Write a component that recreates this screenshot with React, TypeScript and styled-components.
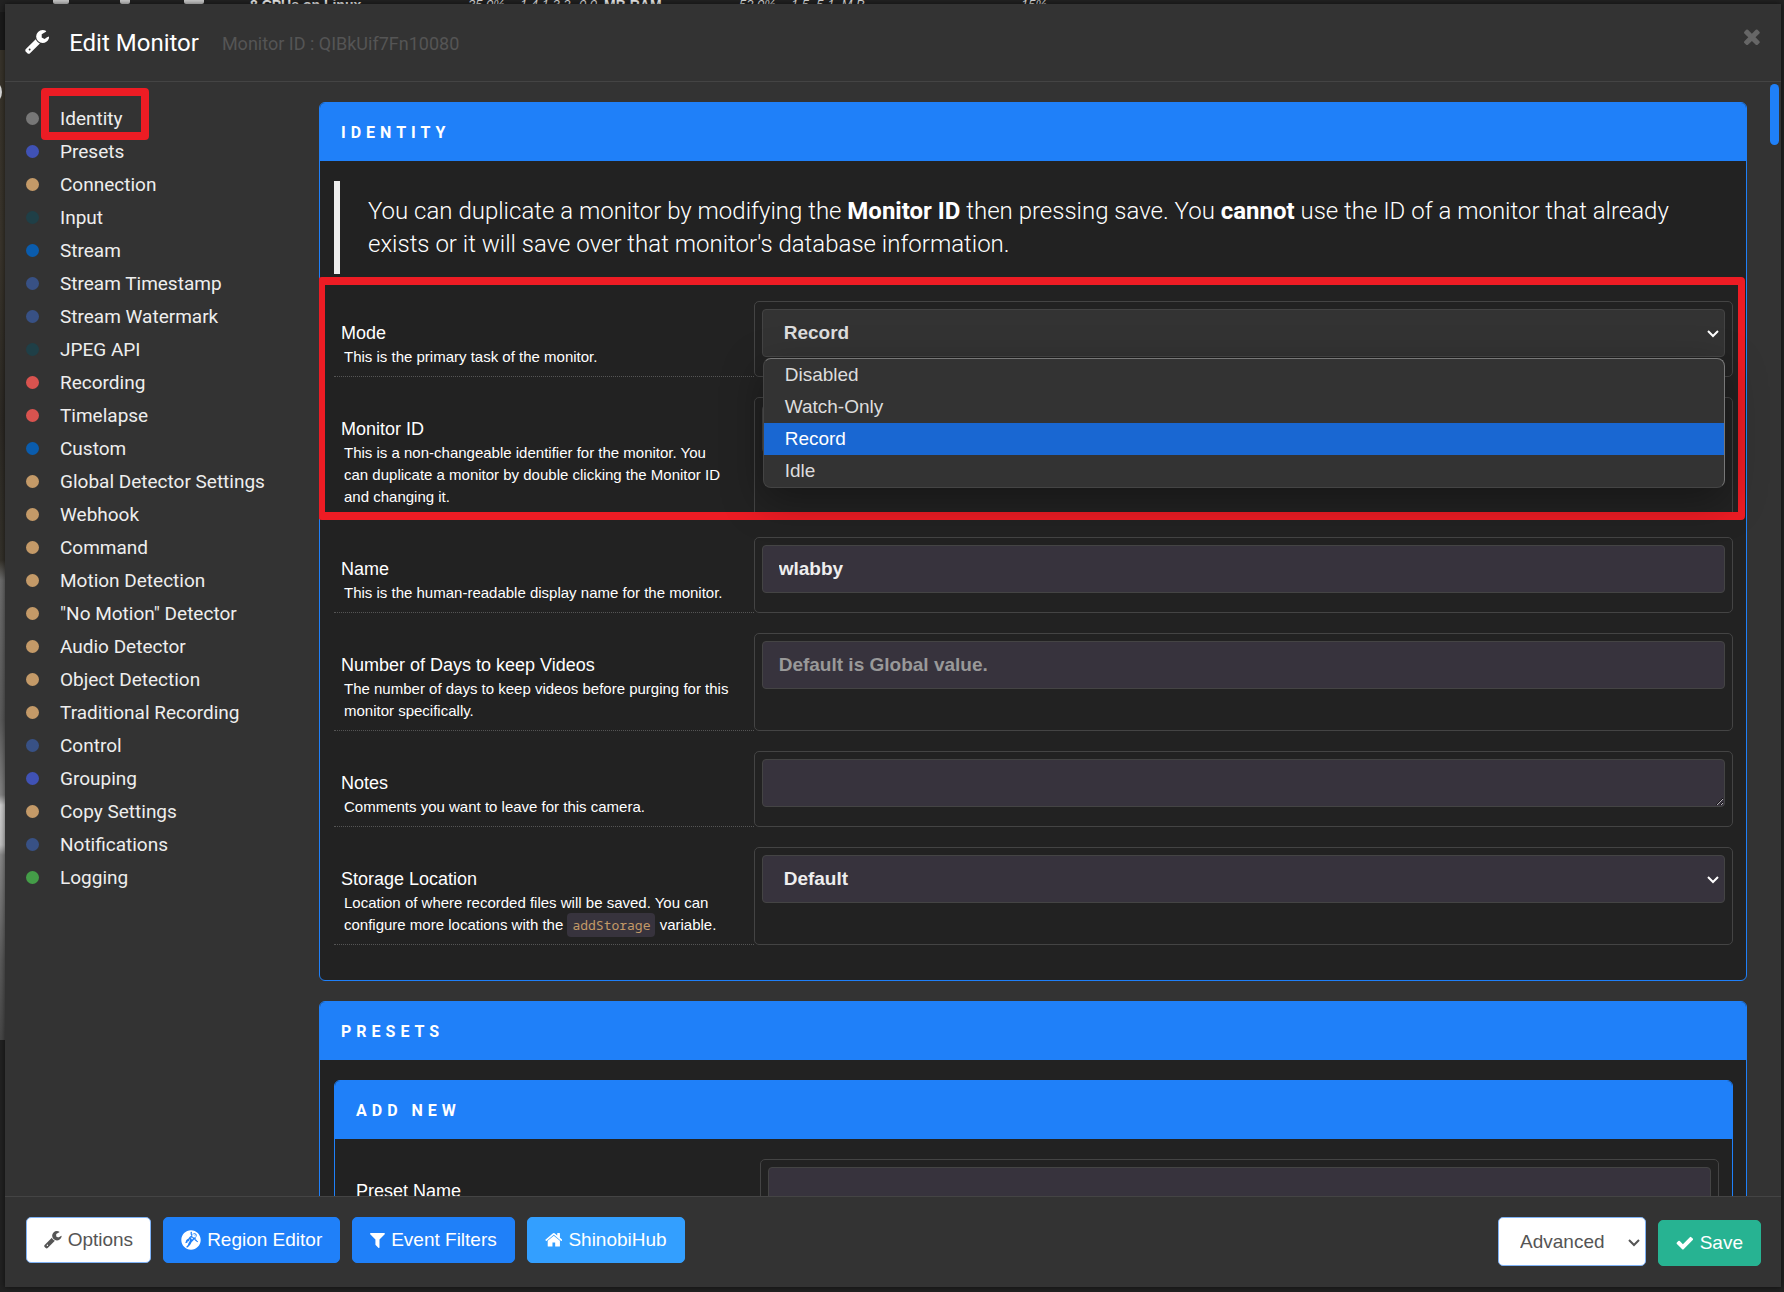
import React from "react";
import styled, { createGlobalStyle, css } from "styled-components";
import { FaGrav } from "react-icons/fa";

const sans = `"Liberation Sans", Arial, sans-serif`;
const roboto = `Roboto, "Liberation Sans", sans-serif`;

const GlobalStyle = createGlobalStyle`
  *, *::before, *::after { box-sizing: border-box; }
  body { margin: 0; background: #222; color: #fff; font-family: ${roboto}; }
  h1, h2, p, ul, blockquote { margin: 0; padding: 0; }
`;

const Page = styled.div`
  position: relative;
  height: 100vh;
  padding: 4px 3px 5px 5px;
  overflow: hidden;
  background: #222;
`;

const Backdrop = styled.div`
  position: absolute;
  inset: 0;
`;

const EdgePhoto = styled.div`
  width: 6px;
  height: 1040px;
  background: linear-gradient(
    #1b1b1b 0 50px,
    #38342b 50px,
    #3a352c 250px,
    #2d2a25 420px,
    #35322b 560px,
    #6e6e6e 580px,
    #5c5c5c 720px,
    #858585 795px,
    #d2d2d2 805px,
    #c4c4c4 845px,
    #8a8a8a 855px,
    #5c5c5c 960px,
    #484848 1040px
  );

  &::after {
    content: "";
    position: absolute;
    left: -20px;
    top: 80px;
    width: 22px;
    height: 24px;
    border: 2px solid #ddd;
    border-radius: 50%;
  }
`;

const StatusStrip = styled.div`
  position: absolute;
  top: 0;
  left: 0;
  right: 0;
  height: 12px;
  overflow: hidden;
  display: grid;
  grid-template-columns: 53px 67px 64px 66px 218px 52px 59px 25px 135px 52px 230px 1fr;
  background: #222;
  font: 400 13px/14px ${sans};
  color: #ddd;
  white-space: pre;

  b { color: #eee; font-size: 14px; }
  i, b { margin-top: -2px; }
`;

const StripMark = styled.span<{ $w: number }>`
  width: ${(p) => p.$w}px;
  height: 4px;
  border-radius: 0 0 2px 2px;
  background: #ccc;
`;

const Modal = styled.div`
  position: relative;
  height: 100%;
  display: flex;
  flex-direction: column;
  background: #333;
  box-shadow: 0 0 6px rgba(0, 0, 0, 0.6);
`;

const Header = styled.header`
  flex: none;
  display: flex;
  align-items: center;
  height: 78px;
  padding: 0 20px;
  border-bottom: 1px solid #444;
`;

const Title = styled.h1`
  margin-left: 20px;
  font: 400 24px/30px ${roboto};
`;

const SubTitle = styled.span`
  margin: 3px 0 0 23px;
  font: 400 18px/24px ${roboto};
  color: #555;
`;

const CloseButton = styled.button`
  align-self: flex-start;
  display: flex;
  margin: 24px 1px 0 auto;
  padding: 0;
  border: 0;
  background: none;
  color: #666;
`;

const Main = styled.div`
  position: relative;
  flex: 1;
  min-height: 0;
  display: flex;
  overflow: hidden;
`;

const Sidebar = styled.nav`
  flex: none;
  width: 314px;
  padding: 20px 0 0 21px;
`;

const NavList = styled.ul`
  list-style: none;
`;

const NavItem = styled.li<{ $dot: string }>`
  display: flex;
  align-items: center;
  gap: 21px;
  height: 33px;

  &::before {
    content: "";
    width: 13px;
    height: 13px;
    border-radius: 50%;
    background: ${(p) => p.$dot};
  }
`;

const NavLink = styled.a`
  position: relative;
  font: 400 19px/33px ${roboto};
  color: #eee;
  text-decoration: none;
`;

const callout = css`
  position: absolute;
  border: solid #ed1c24;
  border-radius: 4px;
  pointer-events: none;
`;

const NavCallout = styled.span`
  ${callout}
  top: -14px;
  left: -19px;
  width: 108px;
  height: 52px;
  border-width: 8px;
`;

const RowsCallout = styled.div`
  ${callout}
  inset: -24px -12px -3px -16px;
  border-width: 8px 7px;
`;

const Content = styled.div`
  flex: 1;
  min-width: 0;
  padding: 20px 34px 20px 0;
  display: flex;
  flex-direction: column;
  gap: 20px;
  overflow: hidden;
`;

const ScrollThumb = styled.div`
  position: absolute;
  top: 2px;
  right: 2px;
  width: 9px;
  height: 61px;
  border-radius: 5px;
  background: #1f80f9;
`;

const Panel = styled.section`
  flex: none;
  border: 1px solid #1f80f9;
  border-radius: 6px;
  background: #222;
`;

const PanelHead = styled.h2`
  height: 58px;
  padding: 1px 21px 0;
  border-radius: 5px 5px 0 0;
  background: #1f80f9;
  font: 700 16px/58px ${roboto};
  letter-spacing: 5px;
  text-transform: uppercase;
`;

const PanelBody = styled.div`
  padding: 20px 13px 35px 14px;
`;

const Quote = styled.blockquote`
  margin-bottom: 27px;
  padding: 14px 27px 13px 28px;
  border-left: 6px solid #eee;
  font: 300 24px/33px ${roboto};

  strong { font-weight: 700; }
`;

const Rows = styled.div`
  position: relative;
  display: flex;
  flex-direction: column;
  gap: 20px;

  & + & { margin-top: 20px; }
`;

const Row = styled.div`
  display: grid;
  grid-template-columns: 3fr 7fr;
`;

const RowLabel = styled.label`
  display: block;
  padding: 20px 20px 8px 7px;
  border-bottom: 1px dotted #555;
  font: 400 18px/25px ${sans};
`;

const Hint = styled.small`
  display: block;
  max-width: 392px;
  padding-left: 3px;
  font: 400 15px/22px ${sans};

  code {
    padding: 3px 5px;
    border-radius: 4px;
    background: #37333d;
    color: #c49a68;
    font: 400 13px/16px "Noto Sans Mono", "DejaVu Sans Mono", monospace;
  }
`;

const ControlBox = styled.div`
  padding: 7px;
  border: 1px solid #444;
  border-radius: 5px;
`;

const ControlAnchor = styled.div`
  position: relative;
`;

const control = css`
  display: block;
  width: 100%;
  height: 48px;
  border: 1px solid #444;
  border-radius: 4px;
  background: #37333d;
  color: #eee;
  font: 700 19px/24px ${sans};
  outline: 0;
`;

const TextInput = styled.input`
  ${control}
  padding: 0 16px;
  &::placeholder { color: #999; opacity: 1; }
`;

const NotesInput = styled.textarea`
  ${control}
  padding: 10px 16px;
`;

const Select = styled.select<{ $open?: boolean }>`
  ${control}
  appearance: none;
  padding: 0 21px;
  ${(p) => p.$open && css`background: #333; color: #ddd;`}
`;

const Chevron = styled.svg`
  position: absolute;
  right: 6px;
  top: calc(50% - 3px);
  width: 12px;
  height: 8px;
  fill: none;
  stroke: currentColor;
  stroke-width: 2;
  pointer-events: none;
`;

const Options = styled.ul`
  position: absolute;
  z-index: 2;
  top: 49px;
  left: 1px;
  right: 0;
  border: 1px solid #444;
  border-top-color: #777;
  border-right-color: #777;
  border-radius: 8px;
  background: #333;
  box-shadow: 0 12px 40px rgba(0, 0, 0, 0.35);
  overflow: hidden;
  list-style: none;
`;

const Option = styled.li<{ $selected: boolean }>`
  padding: 0 21px;
  font: 400 19px/32px ${sans};
  color: ${(p) => (p.$selected ? "#fff" : "#ddd")};
  background: ${(p) => (p.$selected ? "#1967d2" : "transparent")};
`;

const Footer = styled.footer`
  flex: none;
  display: flex;
  gap: 12px;
  padding: 20px 20px 21px 21px;
  border-top: 1px solid #444;
`;

const Button = styled.button<{ $bg: string; $fg?: string; $edge?: string }>`
  display: flex;
  align-items: center;
  gap: 6px;
  height: 46px;
  padding: 0 17px;
  border: 1px solid ${(p) => p.$edge ?? p.$bg};
  border-radius: 5px;
  background: ${(p) => p.$bg};
  color: ${(p) => p.$fg ?? "#fff"};
  font: 400 19px/24px ${sans};
`;

const FooterEnd = styled.div`
  display: flex;
  align-items: flex-end;
  gap: 12px;
  margin-left: auto;
`;

const LevelAnchor = styled.div`
  position: relative;
  color: #555;
`;

const LevelSelect = styled.select`
  appearance: none;
  display: block;
  width: 148px;
  height: 49px;
  padding: 0 21px;
  border: 1px solid #7fb2f5;
  border-radius: 5px;
  background: #fff;
  color: inherit;
  font: 400 19px/24px ${sans};
`;

const paths = {
  wrench: {
    box: "64 128 1664 1792",
    d: "M448 1472q0-26-19-45t-45-19-45 19-19 45 19 45 45 19 45-19 19-45zm644-420l-682 682q-37 37-90 37-52 0-91-37l-106-108q-38-36-38-90 0-53 38-91l681-681q39 98 114.500 173.500t173.500 114.500zm634-435q0 39-23 106-47 134-164.500 217.500t-258.500 83.500q-185 0-316.500-131.500t-131.500-316.500 131.500-316.500 316.500-131.500q58 0 121.500 16.500t107.500 46.500q16 11 16 28t-16 28l-293 169v224l193 107q5-3 79-48.500t135.500-81 70.500-35.500q15 0 23.500 10t8.500 25z",
  },
  times: {
    box: "302 256 1188 1280",
    d: "M1490 1322q0 40-28 68l-136 136q-28 28-68 28t-68-28l-294-294-294 294q-28 28-68 28t-68-28l-136-136q-28-28-28-68t28-68l294-294-294-294q-28-28-28-68t28-68l136-136q28-28 68-28t68 28l294 294 294-294q28-28 68-28t68 28l136 136q28 28 28 68t-28 68l-294 294 294 294q28 28 28 68z",
  },
  filter: {
    box: "192 64 1408 1792",
    d: "M1595 295q17 41-14 70l-493 493v742q0 42-39 59-13 5-25 5-27 0-45-19l-256-256q-19-19-19-45v-486l-493-493q-31-29-14-70 17-39 59-39h1280q42 0 59 39z",
  },
  home: {
    box: "64 64 1664 1792",
    d: "M1472 992v480q0 26-19 45t-45 19h-384v-384h-256v384h-384q-26 0-45-19t-19-45v-480q0-1 .5-3t.5-3l575-474 575 474q1 2 1 6zm223-69l-62 74q-8 9-21 11h-3q-13 0-21-7l-692-577-692 577q-12 8-24 7-13-2-21-11l-62-74q-8-10-7-23.500t11-21.500l719-599q32-26 76-26t76 26l244 204v-195q0-14 9-23t23-9h192q14 0 23 9t9 23v408l219 182q10 8 11 21.500t-7 23.500z",
  },
  check: {
    box: "64 64 1664 1792",
    d: "M1671 566q0 40-28 68l-724 724-136 136q-28 28-68 28t-68-28l-136-136-362-362q-28-28-28-68t28-68l136-136q28-28 68-28t68 28l294 295 656-657q28-28 68-28t68 28l136 136q28 28 28 68z",
  },
};

function Icon({ name, size = 19 }: { name: keyof typeof paths; size?: number }) {
  return (
    <svg height={size} viewBox={paths[name].box} fill="currentColor" aria-hidden="true">
      <path d={paths[name].d} />
    </svg>
  );
}

function Caret() {
  return (
    <Chevron viewBox="0 0 12 8" aria-hidden="true">
      <path d="M1 1l5 5 5-5" />
    </Chevron>
  );
}

const grey = "#777";
const indigo = "#4052b5";
const tan = "#c49a68";
const teal = "#1f3f47";
const blue = "#0a5cad";
const navy = "#385185";
const red = "#d9534f";
const green = "#449d48";

const sections: [string, string][] = [
  ["Identity", grey],
  ["Presets", indigo],
  ["Connection", tan],
  ["Input", teal],
  ["Stream", blue],
  ["Stream Timestamp", navy],
  ["Stream Watermark", navy],
  ["JPEG API", teal],
  ["Recording", red],
  ["Timelapse", red],
  ["Custom", blue],
  ["Global Detector Settings", tan],
  ["Webhook", tan],
  ["Command", tan],
  ["Motion Detection", tan],
  ['"No Motion" Detector', tan],
  ["Audio Detector", tan],
  ["Object Detection", tan],
  ["Traditional Recording", tan],
  ["Control", navy],
  ["Grouping", indigo],
  ["Copy Settings", tan],
  ["Notifications", navy],
  ["Logging", green],
];

const modes = ["Disabled", "Watch-Only", "Record", "Idle"];

function Field(props: {
  id: string;
  label: string;
  hint?: React.ReactNode;
  children: React.ReactNode;
}) {
  return (
    <Row>
      <RowLabel htmlFor={props.id}>
        {props.label}
        {props.hint && <Hint>{props.hint}</Hint>}
      </RowLabel>
      <ControlBox>{props.children}</ControlBox>
    </Row>
  );
}

export default function App() {
  return (
    <>
      <GlobalStyle />
      <Page>
        <Backdrop aria-hidden="true">
          <EdgePhoto />
          <StatusStrip>
            <span />
            <StripMark $w={16} />
            <StripMark $w={10} />
            <StripMark $w={20} />
            <b>8 CPUs on Linux</b>
            <i>35.0%</i>
            <i>1 4 1 3 2</i>
            <i>0 0</i>
            <b>MB RAM</b>
            <i>52.0%</i>
            <i>1 5  5 1  M B</i>
            <i>15%</i>
          </StatusStrip>
        </Backdrop>
        <Modal role="dialog" aria-label="Edit Monitor">
          <Header>
            <Icon name="wrench" size={26} />
            <Title>Edit Monitor</Title>
            <SubTitle>Monitor ID : QIBkUif7Fn10080</SubTitle>
            <CloseButton type="button" aria-label="Close">
              <Icon name="times" size={17} />
            </CloseButton>
          </Header>
          <Main>
            <Sidebar>
              <NavList>
                {sections.map(([name, dot]) => (
                  <NavItem key={name} $dot={dot}>
                    <NavLink href="#">
                      {name}
                      {name === "Identity" && <NavCallout />}
                    </NavLink>
                  </NavItem>
                ))}
              </NavList>
            </Sidebar>
            <Content>
              <Panel>
                <PanelHead>Identity</PanelHead>
                <PanelBody>
                  <Quote>
                    You can duplicate a monitor by modifying the <strong>Monitor ID</strong> then
                    pressing save. You <strong>cannot</strong> use the ID of a monitor that already
                    exists or it will save over that monitor's database information.
                  </Quote>
                  <Rows>
                    <Field id="mode" label="Mode" hint="This is the primary task of the monitor.">
                      <ControlAnchor>
                        <Select id="mode" defaultValue="Record" $open>
                          {modes.map((m) => (
                            <option key={m}>{m}</option>
                          ))}
                        </Select>
                        <Caret />
                        <Options>
                          {modes.map((m) => (
                            <Option key={m} $selected={m === "Record"}>
                              {m}
                            </Option>
                          ))}
                        </Options>
                      </ControlAnchor>
                    </Field>
                    <Field
                      id="mid"
                      label="Monitor ID"
                      hint="This is a non-changeable identifier for the monitor. You can duplicate a monitor by double clicking the Monitor ID and changing it."
                    >
                      <TextInput id="mid" />
                    </Field>
                    <RowsCallout />
                  </Rows>
                  <Rows>
                    <Field
                      id="name"
                      label="Name"
                      hint="This is the human-readable display name for the monitor."
                    >
                      <TextInput id="name" defaultValue="wlabby" />
                    </Field>
                    <Field
                      id="days"
                      label="Number of Days to keep Videos"
                      hint="The number of days to keep videos before purging for this monitor specifically."
                    >
                      <TextInput id="days" placeholder="Default is Global value." />
                    </Field>
                    <Field
                      id="notes"
                      label="Notes"
                      hint="Comments you want to leave for this camera."
                    >
                      <NotesInput id="notes" />
                    </Field>
                    <Field
                      id="storage"
                      label="Storage Location"
                      hint={
                        <>
                          Location of where recorded files will be saved. You can configure more
                          locations with the <code>addStorage</code> variable.
                        </>
                      }
                    >
                      <ControlAnchor>
                        <Select id="storage">
                          <option>Default</option>
                        </Select>
                        <Caret />
                      </ControlAnchor>
                    </Field>
                  </Rows>
                </PanelBody>
              </Panel>
              <Panel>
                <PanelHead>Presets</PanelHead>
                <PanelBody>
                  <Panel>
                    <PanelHead>Add New</PanelHead>
                    <PanelBody>
                      <Field id="preset" label="Preset Name">
                        <TextInput id="preset" />
                      </Field>
                    </PanelBody>
                  </Panel>
                </PanelBody>
              </Panel>
            </Content>
            <ScrollThumb />
          </Main>
          <Footer>
            <Button type="button" $bg="#fff" $fg="#555" $edge="#7fb2f5">
              <Icon name="wrench" />
              Options
            </Button>
            <Button type="button" $bg="#1f80f9">
              <FaGrav size={20} aria-hidden="true" />
              Region Editor
            </Button>
            <Button type="button" $bg="#1f80f9">
              <Icon name="filter" />
              Event Filters
            </Button>
            <Button type="button" $bg="#339fff">
              <Icon name="home" />
              ShinobiHub
            </Button>
            <FooterEnd>
              <LevelAnchor>
                <LevelSelect aria-label="Options level">
                  <option>Advanced</option>
                </LevelSelect>
                <Caret />
              </LevelAnchor>
              <Button type="button" $bg="#27b392">
                <Icon name="check" />
                Save
              </Button>
            </FooterEnd>
          </Footer>
        </Modal>
      </Page>
    </>
  );
}
